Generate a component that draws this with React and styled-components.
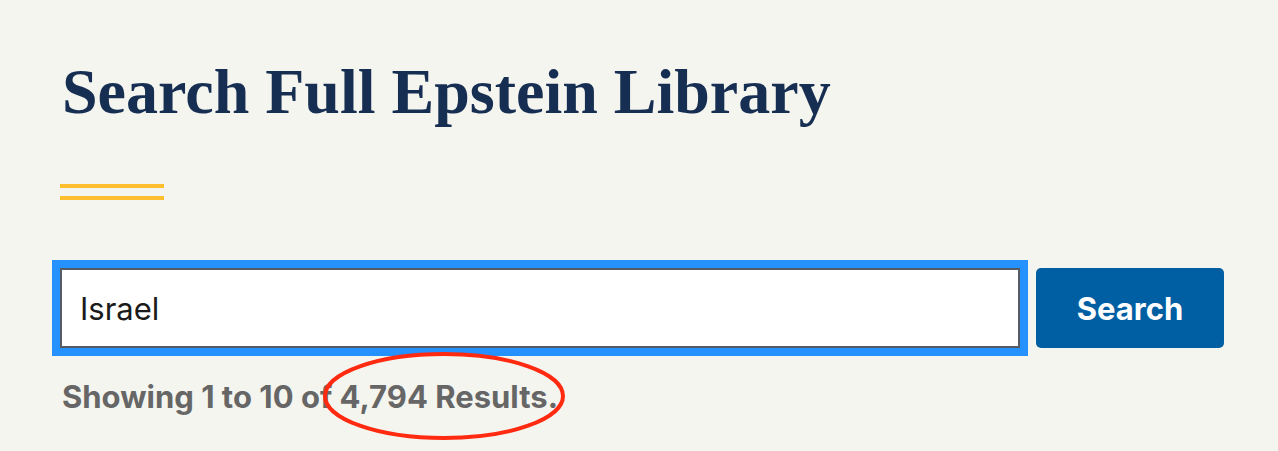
import React from "react";
import styled, { createGlobalStyle } from "styled-components";

const Global = createGlobalStyle`
  html, body { margin: 0; padding: 0; background: #f5f5f0; }
  body { font-family: "Inter", "Liberation Sans", sans-serif; }
`;

const Page = styled.main`
  padding: 52px 0 0 62px;
  width: 1224px;
  min-height: 451px;
  box-sizing: border-box;
`;

const Title = styled.h1`
  margin: 0;
  font-family: "Liberation Serif", serif;
  font-weight: 700;
  font-size: 64px;
  line-height: 80px;
  color: #162e51;
`;

const Rule = styled.div`
  margin: 52px 0 0 -2px;
  width: 104px;
  height: 8px;
  border-top: 4px solid #ffbe2e;
  border-bottom: 4px solid #ffbe2e;
  box-sizing: content-box;
`;

const Form = styled.form`
  display: flex;
  align-items: stretch;
  gap: 16px;
  margin: 68px 0 0 -2px;
`;

const Input = styled.input`
  flex: 1;
  height: 80px;
  box-sizing: border-box;
  border: 2px solid #565c65;
  outline: 8px solid #2491ff;
  background: #fff;
  padding: 0 18px;
  font-family: "Inter", "Liberation Sans", sans-serif;
  font-size: 31px;
  color: #1b1b1b;
`;

const Button = styled.button`
  width: 188px;
  height: 80px;
  border: 0;
  border-radius: 5px;
  background: #005ea2;
  color: #fff;
  font-family: "Inter", "Liberation Sans", sans-serif;
  font-weight: 700;
  font-size: 31px;
`;

const Results = styled.p`
  position: relative;
  margin: 31px 0 0 0;
  font-weight: 700;
  font-size: 31px;
  line-height: 36px;
  color: #666666;
`;

const Circle = styled.svg`
  position: absolute;
  left: 260px;
  top: -29px;
  pointer-events: none;
`;

export default function App() {
  return (
    <>
      <Global />
      <Page>
        <Title>Search Full Epstein Library</Title>
        <Rule />
        <Form onSubmit={(e) => e.preventDefault()}>
          <Input defaultValue="Israel" />
          <Button type="submit">Search</Button>
        </Form>
        <Results>
          Showing 1 to 10 of 4,794 Results.
          <Circle width="250" height="92" viewBox="0 0 250 92">
            <ellipse cx="122" cy="46" rx="119" ry="42" fill="none" stroke="#ff2a10" strokeWidth="4" />
          </Circle>
        </Results>
      </Page>
    </>
  );
}
